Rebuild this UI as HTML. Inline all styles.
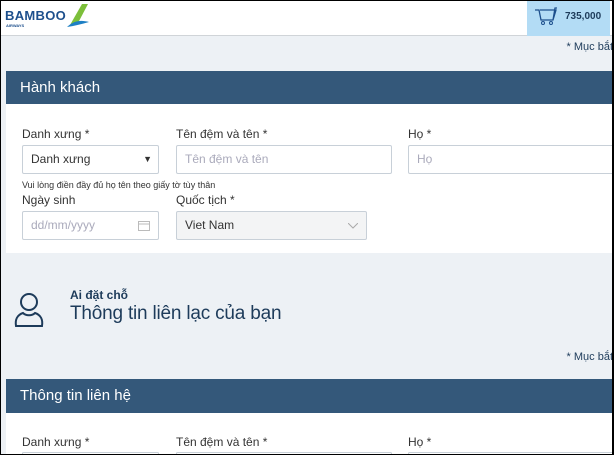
<!DOCTYPE html>
<html style="width:614px;height:455px;overflow:hidden"><head><meta charset="utf-8"><style>
*{box-sizing:border-box;margin:0;padding:0}
body{width:614px;height:455px;overflow:hidden;background:#edf1f5;font-family:"Liberation Sans Narrow","Liberation Sans",sans-serif;color:#333;position:relative}
.abs{position:absolute}
.frame{position:absolute;left:0;top:0;width:614px;height:455px;border:1px solid #000;border-right:2px solid #000;pointer-events:none;z-index:10}
.hdr{left:0;top:0;width:614px;height:36px;background:#fff;border-bottom:1px solid #d0d4d8}
.cart{left:527px;top:1px;width:83px;height:35px;background:#b3dcf5}
.bar{left:6px;width:608px;height:33px;background:#34587a;color:#fff;font-size:15px;padding-left:14px;line-height:33px}
.white{left:6px;width:608px;background:#fff}
.lbl{font-size:12px;color:#333}
.inp{height:29px;border:1px solid #c8d0d8;border-radius:2px;background:#fff;font-size:12px;line-height:27px;padding-left:8px}
.ph{color:#aab}
.req{font-size:11px;color:#1d3b5a;right:0}
</style></head><body>
<div class="abs hdr"></div>
<div class="abs" style="left:5px;top:8px;font:bold 13px 'Liberation Sans',sans-serif;color:#1d4f8c;letter-spacing:0.3px">BAMBOO</div>
<div class="abs" style="left:6px;top:23px;font:bold 4px 'Liberation Sans',sans-serif;color:#1d4f8c">AIRWAYS</div>
<svg class="abs" style="left:64px;top:3px" width="26" height="26" viewBox="0 0 26 26"><path d="M18 1 L24 1 L14 20 L6 22 Z" fill="#7cbf3a"/><path d="M3 24 C10 17 18 17 25 19 C18 21 10 23 3 24Z" fill="#1d7fc4"/></svg>
<div class="abs cart"></div>
<svg class="abs" style="left:534px;top:7px" width="24" height="20" viewBox="0 0 24 20"><path d="M1 3 H5 L7 13 H19 L22 3 H6 M19 13 L21 1 H23" fill="none" stroke="#1d4f8c" stroke-width="1.3"/><circle cx="9" cy="16" r="1.5" fill="none" stroke="#1d4f8c"/><circle cx="17" cy="16" r="1.5" fill="none" stroke="#1d4f8c"/></svg>
<div class="abs" style="left:565px;top:11px;font-size:10px;font-weight:bold;color:#1d3b5a">735,000</div>
<div class="abs req" style="top:41px;right:1px">* Mục bắt</div>
<div class="abs bar" style="top:71px">Hành khách</div>
<div class="abs white" style="top:104px;height:149px"></div>
<div class="abs lbl" style="left:22px;top:127px">Danh xưng *</div>
<div class="abs lbl" style="left:176px;top:127px">Tên đệm và tên *</div>
<div class="abs lbl" style="left:408px;top:127px">Họ *</div>
<div class="abs inp" style="left:22px;top:145px;width:137px">Danh xưng<span style="position:absolute;right:6px;font-size:9px">▼</span></div>
<div class="abs inp ph" style="left:176px;top:145px;width:216px">Tên đệm và tên</div>
<div class="abs inp ph" style="left:408px;top:145px;width:210px">Họ</div>
<div class="abs" style="left:22px;top:180px;font-size:9px">Vui lòng điền đầy đủ họ tên theo giấy tờ tùy thân</div>
<div class="abs lbl" style="left:22px;top:193px">Ngày sinh</div>
<div class="abs lbl" style="left:176px;top:193px">Quốc tịch *</div>
<div class="abs inp ph" style="left:22px;top:211px;width:137px">dd/mm/yyyy<svg style="position:absolute;right:8px;top:8px" width="12" height="11"><rect x="0.5" y="1.5" width="11" height="9" fill="none" stroke="#bbb"/><line x1="0" y1="4" x2="12" y2="4" stroke="#bbb"/></svg></div>
<div class="abs inp" style="left:176px;top:211px;width:191px;background:#f3f4f5">Viet Nam<svg style="position:absolute;right:8px;top:11px" width="10" height="6"><path d="M0 0 L5 5 L10 0" fill="none" stroke="#aaa"/></svg></div>
<svg class="abs" style="left:13px;top:292px" width="32" height="37" viewBox="0 0 32 37"><circle cx="16" cy="10" r="8" fill="none" stroke="#1d3b5a" stroke-width="2"/><path d="M10 21 C4 23 2 28 3 34 H29 C30 28 28 23 22 21 C19 24 13 24 10 21Z" fill="none" stroke="#1d3b5a" stroke-width="2"/></svg>
<div class="abs" style="left:70px;top:288px;font-size:12px;font-weight:bold;color:#1d3b5a">Ai đặt chỗ</div>
<div class="abs" style="left:70px;top:303px;font-size:19px;letter-spacing:-0.2px;color:#1d3b5a">Thông tin liên lạc của bạn</div>
<div class="abs req" style="top:351px;right:1px">* Mục bắt</div>
<div class="abs bar" style="top:379px;height:34px;line-height:34px">Thông tin liên hệ</div>
<div class="abs white" style="top:413px;height:42px"></div>
<div class="abs lbl" style="left:22px;top:435px">Danh xưng *</div>
<div class="abs lbl" style="left:176px;top:435px">Tên đệm và tên *</div>
<div class="abs lbl" style="left:408px;top:435px">Họ *</div>
<div class="abs inp" style="left:22px;top:452px;width:137px;height:3px"></div>
<div class="abs inp" style="left:176px;top:452px;width:216px;height:3px"></div>
<div class="abs inp" style="left:408px;top:452px;width:206px;height:3px"></div>
<div class="frame"></div>
</body></html>
